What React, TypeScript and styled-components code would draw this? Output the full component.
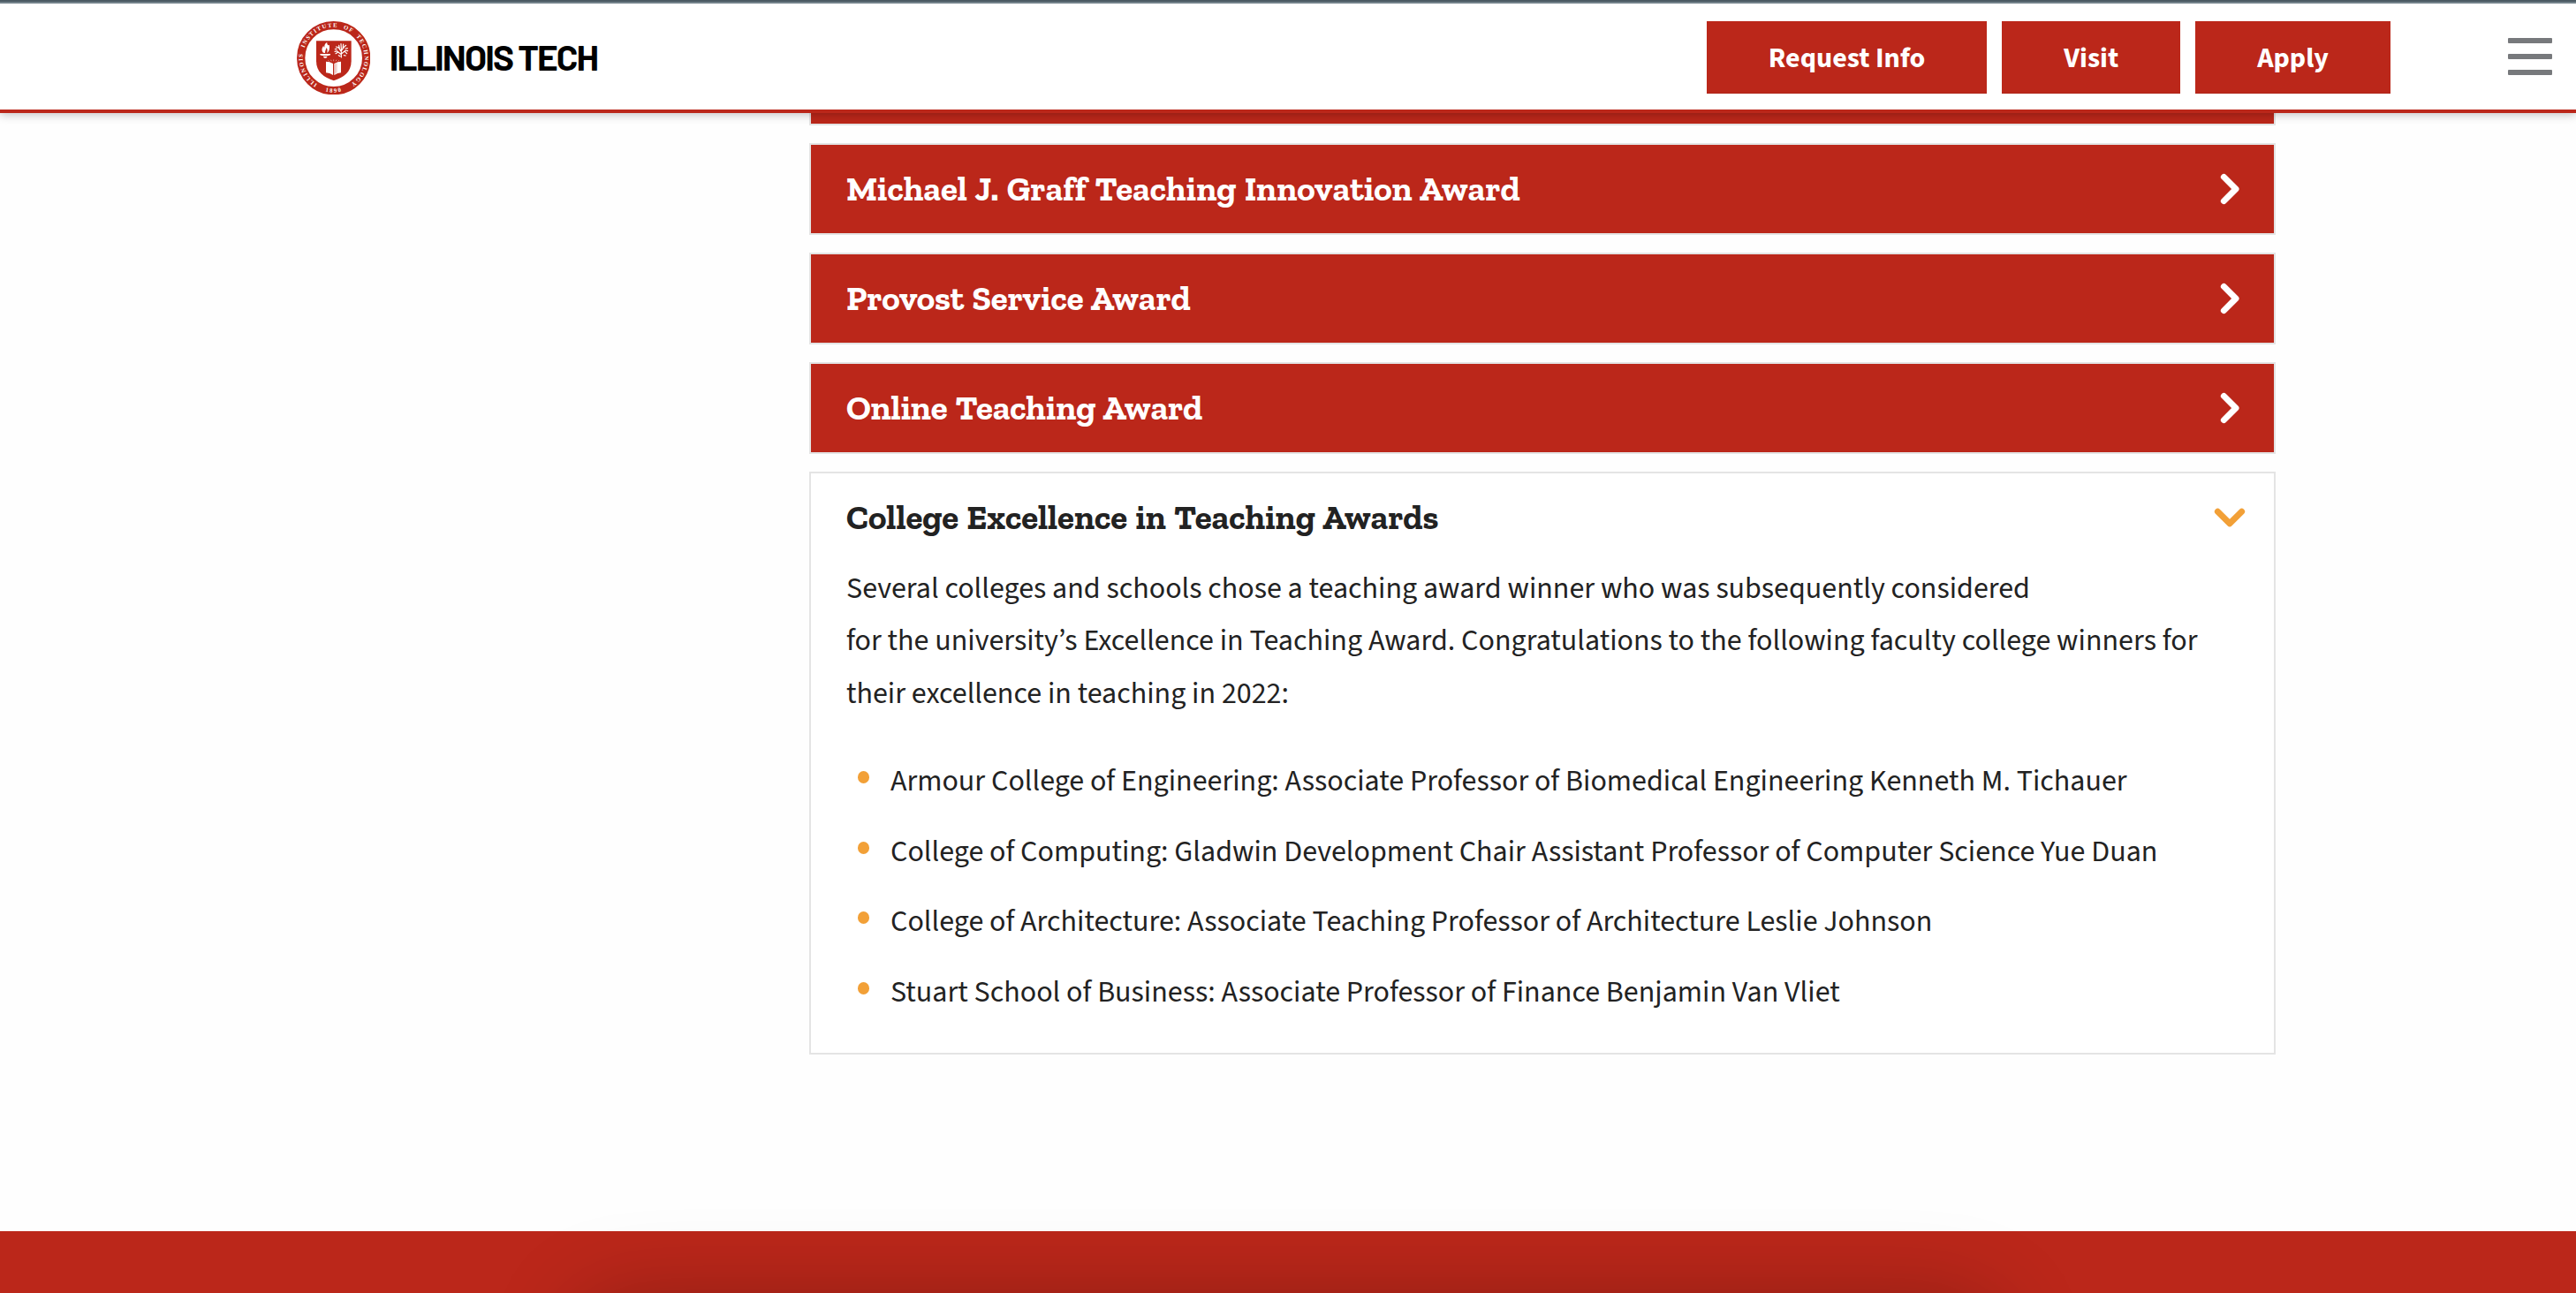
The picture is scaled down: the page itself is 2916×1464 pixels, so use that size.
import React from 'react';
import styled, { createGlobalStyle } from 'styled-components';

const RED = '#bb271a';
const ORANGE = '#f2a037';
const BORDER = '#e4e4e4';
const INK = '#222222';
const SANS = '"Source Sans 3", "Source Sans Pro", "Noto Sans CJK SC", sans-serif';
const SLAB = '"Zilla Slab", "Noto Serif", serif';

const GlobalStyle = createGlobalStyle`
  *, *::before, *::after { box-sizing: border-box; }
  body { margin: 0; background: #fefefe; color: ${INK}; font-family: ${SANS}; }
`;

const Page = styled.div`
  position: relative;
  display: flex;
  flex-direction: column;
  width: 2916px;
  height: 1464px;
  overflow: hidden;
`;

const Header = styled.header`
  position: relative;
  z-index: 1;
  flex: none;
  display: flex;
  align-items: flex-start;
  height: 128px;
  padding: 20px 27px 0 336px;
  background: #fff;
  border-top: 4px solid #72818a;
  border-bottom: 4px solid ${RED};
  box-shadow: 0 2px 10px rgba(0, 0, 0, 0.24);
`;

const TopEdge = styled.div`
  position: absolute;
  top: -4px;
  left: 0;
  right: 0;
  height: 2px;
  background: #4b5a63;
`;

const Brand = styled.a`
  display: flex;
  align-items: flex-start;
  color: #000;
`;

const SealIcon = styled.svg`
  display: block;
  width: 83.33px;
  height: 83.33px;
`;

const Wordmark = styled.span`
  margin: 15px 0 0 21.5px;
  font: 700 40.5px/49px Barlow, "Roboto Condensed", sans-serif;
  letter-spacing: -1.9px;
  white-space: nowrap;
`;

const Actions = styled.nav`
  display: flex;
  gap: 17px;
  margin-left: auto;
`;

const ActionButton = styled.a`
  display: flex;
  align-items: center;
  height: 82px;
  padding: 2px 70px 0;
  background: ${RED};
  box-shadow: inset 0 -1px rgba(0, 0, 0, 0.07);
  color: #fff;
  font-size: 32px;
  font-weight: 700;
  white-space: nowrap;
`;

const MenuButton = styled.div`
  display: flex;
  flex-direction: column;
  gap: 12px;
  margin: 19px 0 0 133px;
`;

const MenuBar = styled.span`
  width: 50px;
  height: 6px;
  border-radius: 1px;
  background: #77797c;
`;

const Main = styled.main`
  flex: none;
  display: flex;
  flex-direction: column;
  gap: 20px;
  width: 1660px;
  height: 1266px;
  margin-left: 916px;
`;

const Panel = styled.section<{ $open?: boolean; $height?: number }>`
  flex: none;
  height: ${p => (p.$height ? `${p.$height}px` : 'auto')};
  border: 2px solid ${BORDER};
  background: ${p => (p.$open ? '#fff' : RED)};
  color: ${p => (p.$open ? INK : '#fff')};
`;

const ScrolledPanel = styled(Panel)`
  border-top: 0;
`;

const PanelHeading = styled.h3<{ $tracking?: number }>`
  display: flex;
  align-items: center;
  justify-content: space-between;
  height: 100px;
  margin: 0;
  padding: 0 30px 0 40px;
  font: 700 39px/100px ${SLAB};
  font-variant-ligatures: none;
  word-spacing: 2px;
  letter-spacing: ${p => p.$tracking ?? 0}px;
`;

const Chevron = styled.svg`
  width: 40px;
  height: 40px;
  fill: none;
  stroke-width: 7;
  stroke-linecap: round;
  stroke-linejoin: round;
`;

const Copy = styled.p`
  margin: 0;
  padding: 0.6px 0 0 40px;
  font-size: 34px;
  line-height: 59.6px;
  white-space: nowrap;
`;

const Winners = styled.ul`
  display: flex;
  flex-direction: column;
  gap: 20px;
  margin: 39.6px 0 0;
  padding: 0 0 0 52.5px;
  list-style: none;
`;

const Winner = styled.li`
  display: flex;
  align-items: flex-start;
  gap: 24px;
  font-size: 34px;
  line-height: 59.6px;
  white-space: nowrap;

  &::before {
    content: '';
    width: 13.5px;
    height: 14px;
    margin-top: 18px;
    border-radius: 50%;
    background: ${ORANGE};
  }
`;

const Footer = styled.footer`
  flex: none;
  height: 70px;
  background: ${RED};
`;

const DockShadow = styled.div`
  position: absolute;
  top: 1474px;
  left: 656px;
  width: 1604px;
  height: 160px;
  border-radius: 50px;
  box-shadow: 0 0 100px rgba(0, 0, 0, 0.27);
`;

function Seal() {
  return (
    <SealIcon viewBox="48 71 250 250">
      <defs>
        <path id="ringTop" d="M 117.500 285 A 105 105 0 1 1 228.500 285" />
        <path id="ringBottom" d="M 113 296.500 A 117 117 0 0 0 233 296.500" />
      </defs>
      <circle cx="173" cy="196" r="111" fill="#fff" stroke={RED} strokeWidth="28" />
      <g fill="#fff" fontFamily='"Liberation Serif", serif' fontSize="20" fontWeight="700">
        <text textLength="538" lengthAdjust="spacing" wordSpacing="8">
          <textPath href="#ringTop">ILLINOIS INSTITUTE OF TECHNOLOGY</textPath>
        </text>
        <text textAnchor="middle" letterSpacing="5">
          <textPath href="#ringBottom" startOffset="51%">1890</textPath>
        </text>
      </g>
      <path d="M114 138H233V207C233 244 207 262 173.500 273C140 262 114 244 114 207Z" fill={RED} />
      <g fill="#fff">
        <path d="M138 178C130 169 134 160 139 154C139 159 141 161 142 159C141 151 145 145 151 143C149 150 156 155 158 151C161 164 158 174 150 179C153 171 152 166 149 161C147 168 144 170 144 179Z" />
        <path d="M127 182H162V186L155 188H134L127 186Z" />
        <path d="M137 190H152L148 196H141Z" />
        <path d="M147 208Q160 208 171 215V254Q160 247 147 246Z" />
        <path d="M198 208Q187 208 175 215V254Q187 247 198 246Z" />
      </g>
      <g fill="none" stroke="#fff" strokeWidth="3.600" strokeLinecap="round">
        <path d="M199 194V164M199 184L184 172M199 182L214 170M199 174L189 160M199 172L209 158M184 172L177 174M188 176L180 181M214 170L221 172M211 174L218 181M189 160L181 158M209 158L215 153M199 164L198 148M193 165L191 153M204 165L206 149M190 187L195 190M208 187L214 188M184 165L178 166M213 164L220 163" />
      </g>
      <path d="M179 216V250M183 213V247" stroke={RED} strokeWidth="1.500" opacity="0.6" />
      <path d="M154 204L158 207M163 202L166 207M173 201V207M183 202L180 207M192 204L188 207" stroke="#fff" strokeWidth="2" opacity="0.7" />
    </SealIcon>
  );
}

function ChevronRight() {
  return (
    <Chevron viewBox="0 0 40 40" stroke="#fff">
      <path d="M13.400 6.400L27 20L13.400 33.600" />
    </Chevron>
  );
}

function ChevronDown() {
  return (
    <Chevron viewBox="0 0 40 40" stroke={ORANGE}>
      <path d="M6.400 13.200L20 26.800L33.600 13.200" />
    </Chevron>
  );
}

const closedPanels = [
  { title: 'Michael J. Graff Teaching Innovation Award', tracking: -0.04 },
  { title: 'Provost Service Award', tracking: -0.15 },
  { title: 'Online Teaching Award', tracking: -0.2 },
];

const winners = [
  'Armour College of Engineering: Associate Professor of Biomedical Engineering Kenneth M. Tichauer',
  'College of Computing: Gladwin Development Chair Assistant Professor of Computer Science Yue Duan',
  'College of Architecture: Associate Teaching Professor of Architecture Leslie Johnson',
  'Stuart School of Business: Associate Professor of Finance Benjamin Van Vliet',
];

export default function App() {
  return (
    <Page>
      <GlobalStyle />
      <Header>
        <TopEdge />
        <Brand>
          <Seal />
          <Wordmark>ILLINOIS TECH</Wordmark>
        </Brand>
        <Actions>
          <ActionButton>Request Info</ActionButton>
          <ActionButton>Visit</ActionButton>
          <ActionButton>Apply</ActionButton>
        </Actions>
        <MenuButton>
          <MenuBar />
          <MenuBar />
          <MenuBar />
        </MenuButton>
      </Header>
      <Main>
        <ScrolledPanel $height={14} />
        {closedPanels.map(p => (
          <Panel key={p.title} $height={104}>
            <PanelHeading $tracking={p.tracking}>
              <span>{p.title}</span>
              <ChevronRight />
            </PanelHeading>
          </Panel>
        ))}
        <Panel $open $height={660}>
          <PanelHeading $tracking={-0.07}>
            <span>College Excellence in Teaching Awards</span>
            <ChevronDown />
          </PanelHeading>
          <Copy>
            Several colleges and schools chose a teaching award winner who was subsequently considered
            <br />
            for the university’s Excellence in Teaching Award. Congratulations to the following faculty college winners for
            <br />
            their excellence in teaching in 2022:
          </Copy>
          <Winners>
            {winners.map(w => (
              <Winner key={w}>{w}</Winner>
            ))}
          </Winners>
        </Panel>
      </Main>
      <Footer />
      <DockShadow />
    </Page>
  );
}
